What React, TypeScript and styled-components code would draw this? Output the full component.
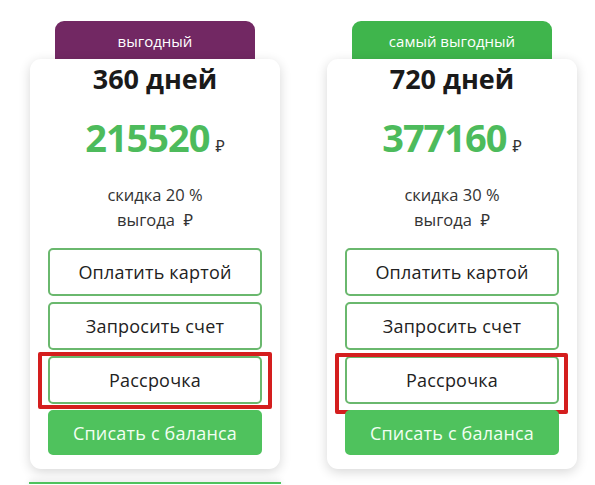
import React from "react";
import styled, { createGlobalStyle } from "styled-components";

const GlobalStyle = createGlobalStyle`
  body {
    margin: 0;
    background: #ffffff;
    font-family: "Open Sans", "Noto Sans", sans-serif;
    color: #222;
    overflow: hidden;
  }
`;

const Page = styled.div`
  display: flex;
  align-items: flex-start;
  gap: 47px;
  padding: 21px 0 0 30px;
`;

const Column = styled.div`
  width: 250px;
  flex-shrink: 0;
  display: flex;
  flex-direction: column;
  align-items: center;
`;

const Badge = styled.div<{ $bg: string }>`
  width: 200px;
  height: 40px;
  flex-shrink: 0;
  margin-bottom: -2px;
  box-sizing: border-box;
  padding-top: 10px;
  border-radius: 9px 9px 0 0;
  background: ${(p) => p.$bg};
  color: #fff;
  font-size: 15px;
  text-align: center;
`;

const Card = styled.div`
  position: relative;
  width: 250px;
  box-sizing: border-box;
  padding: 5px 18px 14px;
  background: #fff;
  border-radius: 11px;
  box-shadow: 0 3px 12px rgba(0, 0, 0, 0.16);
  display: flex;
  flex-direction: column;
  align-items: center;
`;

const Title = styled.div`
  font-size: 27px;
  font-weight: 700;
  line-height: 30px;
  color: #1a1a1a;
`;

const Price = styled.div`
  margin-top: 20px;
  height: 46px;
  display: flex;
  align-items: baseline;
  gap: 6px;
`;

const Amount = styled.span`
  font-size: 38px;
  line-height: 46px;
  font-weight: 700;
  letter-spacing: -1px;
  color: #4dbb5c;
`;

const Currency = styled.span`
  font-size: 16px;
  line-height: 1;
  color: #333;
`;

const Info = styled.div`
  margin-top: 22px;
  font-size: 16.5px;
  line-height: 25px;
  color: #333;
  text-align: center;
`;

const Buttons = styled.div`
  margin-top: 16px;
  width: 100%;
  display: flex;
  flex-direction: column;
  gap: 6px;
`;

const Button = styled.div<{ $filled?: boolean; $mark?: [number, number, number, number] }>`
  position: relative;
  height: ${(p) => (p.$filled ? 45 : 48)}px;
  box-sizing: border-box;
  border: 2px solid ${(p) => (p.$filled ? "#4fc25d" : "#6ab86e")};
  border-radius: 5px;
  background: ${(p) => (p.$filled ? "#4fc25d" : "#fff")};
  color: ${(p) => (p.$filled ? "#f2fff2" : "#222")};
  font-size: 18px;
  letter-spacing: 0.2px;
  display: flex;
  align-items: center;
  justify-content: center;

  ${(p) =>
    p.$mark &&
    `
    &::after {
      content: "";
      position: absolute;
      top: ${p.$mark[0]}px;
      right: ${p.$mark[1]}px;
      bottom: ${p.$mark[2]}px;
      left: ${p.$mark[3]}px;
      border: 4px solid #d41e1e;
      border-radius: 2px;
    }
  `}
`;

const NextCard = styled.div`
  margin-top: 13px;
  width: 252px;
  height: 6px;
  border-top: 2px solid #4fc25d;
  box-shadow: 0 -2px 6px rgba(0, 0, 0, 0.08);
`;

type Plan = {
  badge: string;
  badgeColor: string;
  days: string;
  price: string;
  discount: string;
  mark: [number, number, number, number];
  next?: boolean;
};

const plans: Plan[] = [
  {
    badge: "выгодный",
    badgeColor: "#722863",
    days: "360 дней",
    price: "215520",
    discount: "скидка 20 %",
    mark: [-6, -12, -7, -12],
    next: true,
  },
  {
    badge: "самый выгодный",
    badgeColor: "#3fb54c",
    days: "720 дней",
    price: "377160",
    discount: "скидка 30 %",
    mark: [-5, -11, -12, -12],
  },
];

export default function App() {
  return (
    <>
      <GlobalStyle />
      <Page>
        {plans.map((plan) => (
          <Column key={plan.days}>
            <Badge $bg={plan.badgeColor}>{plan.badge}</Badge>
            <Card>
              <Title>{plan.days}</Title>
              <Price>
                <Amount>{plan.price}</Amount>
                <Currency>₽</Currency>
              </Price>
              <Info>
                {plan.discount}
                <br />
                выгода&nbsp; ₽
              </Info>
              <Buttons>
                <Button>Оплатить картой</Button>
                <Button>Запросить счет</Button>
                <Button $mark={plan.mark}>Рассрочка</Button>
                <Button $filled>Списать с баланса</Button>
              </Buttons>
            </Card>
            {plan.next && <NextCard />}
          </Column>
        ))}
      </Page>
    </>
  );
}
